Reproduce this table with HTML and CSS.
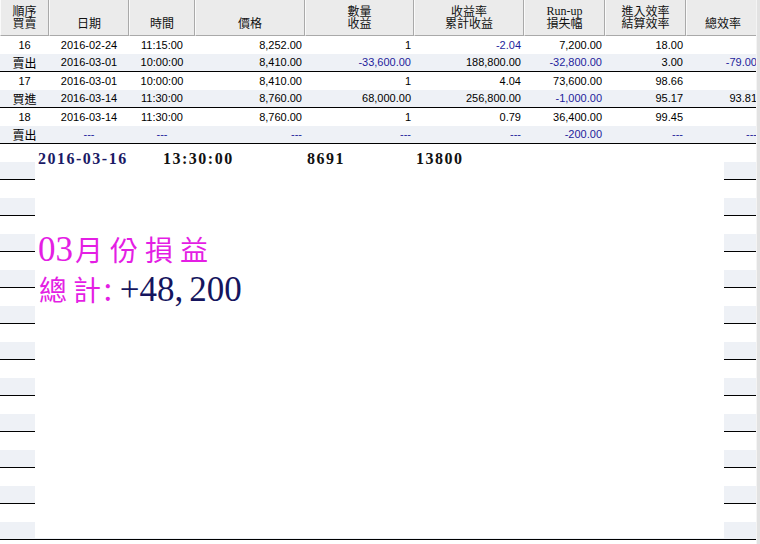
FILE: index.html
```html
<!DOCTYPE html>
<html>
<head>
<meta charset="utf-8">
<link rel="stylesheet" href="styles.css">
</head>
<body>
<div class="view">
  <div class="grid">
    <div class="hrow">
      <div class="hc"><span>順序</span><span>買賣</span></div>
      <div class="hc"><span>日期</span></div>
      <div class="hc"><span>時間</span></div>
      <div class="hc"><span>價格</span></div>
      <div class="hc"><span>數量</span><span>收益</span></div>
      <div class="hc"><span>收益率</span><span>累計收益</span></div>
      <div class="hc"><span class="ser">Run-up</span><span>損失幅</span></div>
      <div class="hc"><span>進入效率</span><span>結算效率</span></div>
      <div class="hc"><span>總效率</span></div>
    </div>

    <div class="row">
      <div class="c">16</div><div class="c">2016-02-24</div><div class="c">11:15:00</div>
      <div class="r">8,252.00</div><div class="r">1</div><div class="r neg">-2.04</div>
      <div class="r">7,200.00</div><div class="r">18.00</div><div class="r"></div>
    </div>
    <div class="row alt">
      <div class="c cj">賣出</div><div class="c">2016-03-01</div><div class="c">10:00:00</div>
      <div class="r">8,410.00</div><div class="r neg">-33,600.00</div><div class="r">188,800.00</div>
      <div class="r neg">-32,800.00</div><div class="r">3.00</div><div class="r neg">-79.00</div>
    </div>
    <div class="row">
      <div class="c">17</div><div class="c">2016-03-01</div><div class="c">10:00:00</div>
      <div class="r">8,410.00</div><div class="r">1</div><div class="r">4.04</div>
      <div class="r">73,600.00</div><div class="r">98.66</div><div class="r"></div>
    </div>
    <div class="row alt">
      <div class="c cj">買進</div><div class="c">2016-03-14</div><div class="c">11:30:00</div>
      <div class="r">8,760.00</div><div class="r">68,000.00</div><div class="r">256,800.00</div>
      <div class="r neg">-1,000.00</div><div class="r">95.17</div><div class="r">93.81</div>
    </div>
    <div class="row">
      <div class="c">18</div><div class="c">2016-03-14</div><div class="c">11:30:00</div>
      <div class="r">8,760.00</div><div class="r">1</div><div class="r">0.79</div>
      <div class="r">36,400.00</div><div class="r">99.45</div><div class="r"></div>
    </div>
    <div class="row alt">
      <div class="c cj">賣出</div><div class="c neg">---</div><div class="c neg">---</div>
      <div class="r neg">---</div><div class="r neg">---</div><div class="r neg">---</div>
      <div class="r neg">-200.00</div><div class="r neg">---</div><div class="r neg">---</div>
    </div>

    <div class="row"></div><div class="row alt"></div>
    <div class="row"></div><div class="row alt"></div>
    <div class="row"></div><div class="row alt"></div>
    <div class="row"></div><div class="row alt"></div>
    <div class="row"></div><div class="row alt"></div>
    <div class="row"></div><div class="row alt"></div>
    <div class="row"></div><div class="row alt"></div>
    <div class="row"></div><div class="row alt"></div>
    <div class="row"></div><div class="row alt"></div>
    <div class="row"></div><div class="row alt"></div>
    <div class="row"></div><div class="row alt"></div>
    <div class="row"></div><div class="row alt"></div>
  </div>

  <div class="overlay">
    <div class="quote">
      <span class="q-date">2016-03-16</span>
      <span class="q-time">13:30:00</span>
      <span class="q-price">8691</span>
      <span class="q-vol">13800</span>
    </div>
    <div class="big month"><span class="num">03</span><span class="zh">月份損益</span></div>
    <div class="big total"><span class="zh">總</span><span class="zh last">計</span><span class="colon">:</span><span class="amt">+48<span class="comma">,</span>200</span></div>
  </div>

  <div class="scrollbar"></div>
</div>
</body>
</html>
```

FILE: styles.css
```css
html, body {
  margin: 0;
  padding: 0;
  background: #ffffff;
}

.view {
  position: relative;
  width: 760px;
  height: 544px;
  overflow: hidden;
  font-family: "Liberation Sans", "Noto Sans CJK TC", sans-serif;
  font-size: 11px;
  color: #000;
}

.grid {
  width: 760px;
}

.hrow,
.row {
  display: grid;
  grid-template-columns: 49px 80px 66px 110px 109px 110px 81px 81px 74px;
}

.hrow {
  height: 36px;
}

.hc {
  box-sizing: border-box;
  background: #ebebeb;
  border-left: 1px solid #fafafa;
  border-right: 1px solid #a9a9a9;
  border-bottom: 1px solid #a9a9a9;
  display: flex;
  flex-direction: column;
  justify-content: flex-end;
  align-items: center;
  padding-bottom: 6px;
  font-family: "Noto Sans CJK TC", sans-serif;
  font-size: 12px;
  line-height: 12px;
  color: #111;
}

.hc span {
  display: block;
  height: 12px;
  line-height: 12px;
}

.hc .ser {
  font-family: "Liberation Serif", serif;
  font-size: 12px;
}

.row {
  box-sizing: border-box;
  height: 18px;
  line-height: 18px;
}

.row.alt {
  background: #eef1f6;
  border-bottom: 1px solid #000;
  line-height: 17px;
}

.c,
.r {
  padding: 0 3px;
  white-space: nowrap;
  overflow: hidden;
}

.c { text-align: center; }
.r { text-align: right; }

.cj {
  font-family: "Noto Sans CJK TC", sans-serif;
  font-size: 12px;
}

.neg { color: #1e1e9c; }

.overlay {
  position: absolute;
  left: 35px;
  top: 144px;
  width: 689px;
  height: 394px;
  background: #ffffff;
  padding: 6px 0 0 3px;
  box-sizing: border-box;
}

.quote {
  display: flex;
  height: 18px;
  line-height: 18px;
  font-family: "Liberation Serif", serif;
  font-weight: bold;
  font-size: 16px;
  letter-spacing: 1.5px;
  color: #111;
}

.q-date { width: 125px; color: #1a1a66; }
.q-time { width: 144px; }
.q-price { width: 109px; }

.big {
  height: 40px;
  line-height: 40px;
  white-space: nowrap;
}

.month { margin-top: 61px; }

.big .num,
.big .colon,
.big .amt {
  font-family: "Liberation Serif", serif;
  font-size: 35px;
  line-height: 40px;
}

.big .zh {
  font-family: "Noto Sans CJK TC", sans-serif;
  font-size: 28px;
  line-height: 40px;
  letter-spacing: 7px;
  color: #e41ee4;
}

.month .num { color: #e41ee4; margin-right: 2px; }

.total .zh { margin-left: 1px; }
.total .zh.last { letter-spacing: 0; margin-left: -1px; }
.total .colon { color: #e41ee4; letter-spacing: 7px; margin-left: 2px; }
.total .amt { color: #15155e; }
.total .comma { letter-spacing: 6px; }

.scrollbar {
  position: absolute;
  right: 0;
  top: 0;
  width: 3px;
  height: 544px;
  background: #e2e2e2;
  border-left: 1px solid #f4f4f4;
}
```
